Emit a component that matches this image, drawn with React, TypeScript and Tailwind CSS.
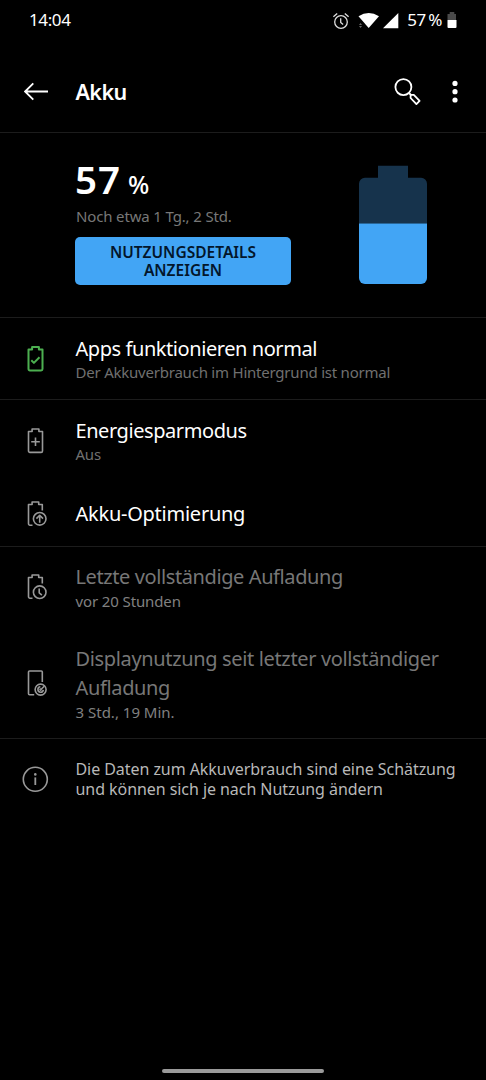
import React from "react";

const BATTERY = "M8.5 5.5h3.6V3h6.8v2.5h3.6v19.5a1.4 1.4 0 0 1-1.4 1.4H9.9a1.4 1.4 0 0 1-1.4-1.4z";
const BATTERY_OPEN = "M12.5 26.2H9.9a1.4 1.4 0 0 1-1.4-1.4V5.5h3.6V3h6.6v2.5h3.6v6";

const Icon = ({
  children,
  className = "text-[#999]",
}: {
  children: React.ReactNode;
  className?: string;
}) => (
  <svg
    viewBox="0 0 30 30"
    className={`h-[30px] w-[30px] ${className}`}
    fill="none"
    stroke="currentColor"
    strokeWidth="1.6"
    strokeLinejoin="round"
  >
    {children}
  </svg>
);

const NormalIcon = () => (
  <Icon className="text-[#4caf50]">
    <path d={BATTERY} strokeWidth="2" />
    <path d="M11.3 16.3l2.6 2.6 5.6-5.6" strokeWidth="2" />
  </Icon>
);

const SaverIcon = () => (
  <Icon>
    <path d={BATTERY} />
    <path d="M15.5 11.5v8.6M11.2 15.8h8.6" />
  </Icon>
);

const OptimizeIcon = () => (
  <Icon>
    <path d={BATTERY_OPEN} />
    <circle cx="19.7" cy="19.8" r="6.3" />
    <path d="M19.7 23.8v-7.4M16.4 19.6l3.3-3.3 3.3 3.3" />
  </Icon>
);

const ChargeIcon = () => (
  <Icon>
    <path d={BATTERY_OPEN} />
    <circle cx="19.7" cy="20.2" r="6.3" />
    <path d="M19.2 16.6v4.2l2.7 2.3" />
  </Icon>
);

const ScreenIcon = () => (
  <Icon>
    <path d="M14.2 26.8H9.5a1 1 0 0 1-1-1V4a1 1 0 0 1 1-1H21.3a1 1 0 0 1 1 1v10" />
    <circle cx="20.6" cy="21.6" r="5.5" />
    <path d="M20.4 18.8a2.7 2.7 0 1 0 2.9 3M21.2 21.2l3-3" />
    <circle cx="20.6" cy="21.6" r="0.6" />
  </Icon>
);

const InfoIcon = () => (
  <Icon>
    <circle cx="15.3" cy="15.3" r="12" />
    <path d="M15.3 13.4v7.6" strokeWidth="1.8" />
    <circle cx="15.3" cy="10.4" r="1.3" fill="currentColor" stroke="none" />
  </Icon>
);

const StatusBar = () => (
  <div className="flex h-10 items-center justify-between pr-[29px] pl-[29px] text-[17px]">
    <span className="tracking-[-0.4px]">14:04</span>
    <div className="flex items-center">
      <svg className="h-5 w-[70px]" viewBox="0 0 70 20" fill="none">
        <g stroke="#ddd" strokeWidth="1.3">
          <circle cx="9" cy="12" r="6.3" />
          <path d="M8.7 8.2v4.2l2.4 2.2M1.4 6.8l3.8-3.4M16.6 6.8l-3.8-3.4" />
        </g>
        <path d="M26.5 6.3Q36.7-.3 47 6.3L36.7 18z" fill="#fff" />
        <path d="M27 15l1.5-2 1.5 2zM27 16l1.5 2 1.5-2z" fill="#666" />
        <path d="M66.3 3v15.3H51z" fill="#fff" />
      </svg>
      <span className="ml-[5px] tracking-[-0.4px]">57&thinsp;%</span>
      <svg className="ml-[5px] h-4 w-[10px]" viewBox="0 0 10 16">
        <path d="M2.7 0h4.6v2H9v6H.5V2h2.2z" fill="#4a4a4a" />
        <path d="M.5 8h9v7a1 1 0 0 1-1 1h-7a1 1 0 0 1-1-1z" fill="#fff" />
      </svg>
    </div>
  </div>
);

const Header = () => (
  <header className="flex h-[93px] items-center border-b border-[#1c1c1c] pt-[11px]">
    <button aria-label="Zurück" className="ml-6">
      <svg className="h-5 w-6" viewBox="0 0 24 20" fill="none" stroke="#fff" strokeWidth="1.8">
        <path d="M24 9.5H1.2M9.3 1.3L1.1 9.5l8.2 8.2" />
      </svg>
    </button>
    <h1 className="ml-[27.5px] flex-1 pt-px text-[21.5px] font-semibold tracking-[-0.6px]">Akku</h1>
    <button aria-label="Suchen">
      <svg className="h-7 w-7" viewBox="0 0 28 28" fill="none" stroke="#fff" strokeWidth="1.8">
        <circle cx="10.4" cy="9.1" r="8" />
        <path d="M16 15l2 2M17.6 20v-3.1h3.2l5.8 6-3.2 3.2z" strokeLinejoin="round" />
      </svg>
    </button>
    <button aria-label="Mehr" className="mr-7 ml-[31px]">
      <svg className="h-6 w-[6px]" viewBox="0 0 6 24" fill="#fff">
        <circle cx="3" cy="3.4" r="2.6" />
        <circle cx="3" cy="11.7" r="2.6" />
        <circle cx="3" cy="20" r="2.6" />
      </svg>
    </button>
  </header>
);

const Summary = () => (
  <section className="flex h-[185px] justify-between border-b border-[#1c1c1c] pr-[58px] pl-[75px]">
    <div className="w-[216px] pt-5">
      <div className="flex h-[53px] items-baseline">
        <span className="text-[38.5px] leading-[52px] font-semibold tracking-[1px]">57</span>
        <span className="ml-[7px] text-[25px] leading-[30px] font-medium">%</span>
      </div>
      <p className="h-[31px] pl-px text-[15px] leading-5 tracking-[-0.15px] text-[#777]">
        Noch etwa 1 Tg., 2 Std.
      </p>
      <button className="h-12 w-full rounded-[5px] bg-[#42a5f5] text-center text-[15.5px] leading-[18px] font-semibold text-[#03162b]">
        NUTZUNGSDETAILS
        <br />
        ANZEIGEN
      </button>
    </div>
    <svg className="mt-8 h-[120px] w-[70px]" viewBox="0 0 70 120">
      <path d="M20 .7h30v12h13a6 6 0 0 1 6 6v40H1v-40a6 6 0 0 1 6-6h13z" fill="#16334c" />
      <path d="M1 58.5h68V113a6 6 0 0 1-6 6H7a6 6 0 0 1-6-6z" fill="#42a5f5" />
    </svg>
  </section>
);

interface RowProps {
  icon: React.ReactNode;
  title: React.ReactNode;
  sub?: string;
  className: string;
  titleClass?: string;
  subClass?: string;
}

const Row = ({
  icon,
  title,
  sub,
  className,
  titleClass = "text-white leading-7 tracking-[-0.43px]",
  subClass = "text-[#707070] leading-[19px] tracking-[-0.22px]",
}: RowProps) => (
  <div className={`flex items-center ${className}`}>
    <div className="w-[75.5px] shrink-0 pl-5">{icon}</div>
    <div>
      <h2 className={`text-xl whitespace-nowrap ${titleClass}`}>{title}</h2>
      {sub && <p className={`text-[15px] ${subClass}`}>{sub}</p>}
    </div>
  </div>
);

export default function App() {
  return (
    <div className="flex h-[1080px] w-[486px] flex-col overflow-hidden bg-black font-['Noto_Sans',sans-serif] text-white">
      <StatusBar />
      <Header />
      <Summary />
      <Row
        className="h-[82px] border-b border-[#1c1c1c]"
        icon={<NormalIcon />}
        title="Apps funktionieren normal"
        sub="Der Akkuverbrauch im Hintergrund ist normal"
      />
      <Row className="h-[81px]" icon={<SaverIcon />} title="Energiesparmodus" sub="Aus" />
      <Row
        className="h-[66px] border-b border-[#1c1c1c]"
        icon={<OptimizeIcon />}
        title="Akku-Optimierung"
        titleClass="text-white leading-7 tracking-[-0.25px] pt-px"
      />
      <Row
        className="h-20"
        icon={<ChargeIcon />}
        title="Letzte vollständige Aufladung"
        sub="vor 20 Stunden"
        titleClass="text-[#777] leading-7 tracking-[-0.4px]"
        subClass="text-[#808080] leading-5 tracking-[-0.12px]"
      />
      <Row
        className="h-[112px] border-b border-[#1c1c1c]"
        icon={<ScreenIcon />}
        title={
          <>
            Displaynutzung seit letzter vollständiger
            <br />
            Aufladung
          </>
        }
        sub="3 Std., 19 Min."
        titleClass="text-[#777] leading-[29px] tracking-[-0.35px]"
        subClass="text-[#808080] leading-5"
      />
      <div className="flex h-20 items-center">
        <div className="w-[75.5px] shrink-0 pl-5">
          <InfoIcon />
        </div>
        <p className="pt-px text-base leading-[19.5px] tracking-[-0.06px] whitespace-nowrap text-[#b8b8b8]">
          Die Daten zum Akkuverbrauch sind eine Schätzung
          <br />
          und können sich je nach Nutzung ändern
        </p>
      </div>
      <div className="mx-auto mt-auto mb-[7px] h-1 w-[162px] rounded-full bg-[#9a9a9a]" />
    </div>
  );
}
